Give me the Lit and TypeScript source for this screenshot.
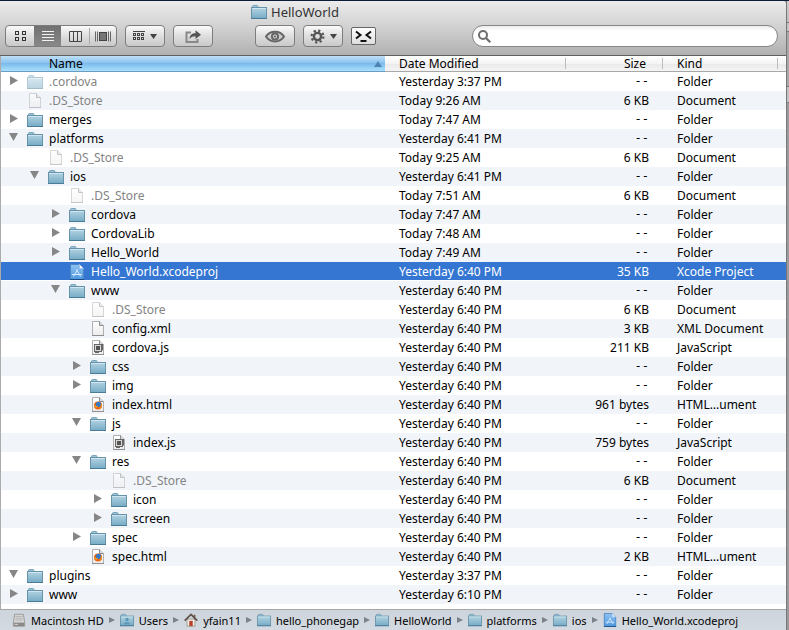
import { LitElement, html, css, svg, nothing } from "lit";
import { customElement, property, state } from "lit/decorators.js";
import { classMap } from "lit/directives/class-map.js";
import { styleMap } from "lit/directives/style-map.js";

type IconName = "folder" | "doc" | "js" | "html" | "xcode" | "disk" | "users" | "home";

const folderShape = svg`
  <path d="M1.5 3.5V2L2.2 1.5H6.2L7 2.2V3.5" fill="#9cc4d8" stroke="#7ba5ba"/>
  <rect x="0.5" y="3.5" width="15" height="11" fill="url(#front)" stroke="#6793aa"/>
  <path d="M1 4.5H15" stroke="#cfe5ef"/>
  <path d="M0 14.5H16" stroke="#4b7c97"/>`;

const pageShape = svg`
  <path d="M2.5 0.5H9.5L13.5 4.5V14.5H2.5Z" fill="url(#page)" stroke="#b0b0b0"/>
  <path d="M2 14.5H14" stroke="#8f8f8f"/>
  <path d="M9.5 0.5V4.5H13.5" fill="#dcdcdc" stroke="#8c8c8c"/>`;

const shapes: Record<IconName, unknown> = {
  folder: folderShape,
  doc: pageShape,
  js: svg`${pageShape}
    <rect x="4.5" y="4.5" width="7" height="7" fill="#d8d8d8" stroke="#666"/>
    <rect x="6" y="6" width="4" height="4" fill="#555"/>
    <path d="M12.5 4V10.5M5 12.5H9" stroke="#666"/>`,
  html: svg`${pageShape}
    <circle cx="8" cy="8.5" r="4" fill="#e8641b"/>
    <circle cx="8.5" cy="7.3" r="2.6" fill="#3579c4"/>
    <path d="M4.2 7C5 9.2 6.5 9.6 8.2 9.2C7 10.6 5.8 10.6 5 10.1Z" fill="#f7a823"/>
    <path d="M12 6.5C12.4 9.5 10.8 12.5 8 12.5C10 11.6 11 9.6 10.8 7Z" fill="#f28a1e"/>`,
  xcode: svg`
    <path d="M1.5 0.5H10.5L14.5 4.5V15.5H1.5Z" fill="url(#blue)" stroke="#4a86c4"/>
    <path d="M1 15.5H15" stroke="#1d4d86"/>
    <path d="M10.5 0.5V4.5H14.5Z" fill="#fff" stroke="#9fc3e8"/>
    <path d="M4.5 12.5L8.5 5.5M7.5 5.5L11.5 12.5M3 10.5H13" stroke="#d6eafc"/>`,
  disk: svg`
    <path d="M3 1.5H13L14.5 11V15H1.5V11Z" fill="#d5d5d5" stroke="#959595"/>
    <path d="M4 4H12M4 6H12M4 8H12" stroke="#b4b4b4"/>
    <rect x="2" y="11" width="12" height="4" fill="#8a8a8a"/>
    <path d="M3 13H7" stroke="#ddd"/>`,
  users: svg`${folderShape}
    <circle cx="8" cy="7.5" r="2" fill="#5f9ab8"/>
    <path d="M4.5 13C4.5 9.5 11.5 9.5 11.5 13Z" fill="#5f9ab8"/>`,
  home: svg`
    <rect x="3.5" y="7" width="9" height="8" fill="#f7f3ea" stroke="#9b9386"/>
    <rect x="11" y="2" width="2" height="4" fill="#7c5a45"/>
    <path d="M0.8 8.6L8 1.6L15.2 8.6" stroke="#5c5148" stroke-width="2"/>
    <rect x="6" y="9" width="4" height="6" fill="#b5432c"/>`,
};

@customElement("file-icon")
export class FileIcon extends LitElement {
  @property() name: IconName = "folder";

  static styles = css`
    :host { display: block; flex: none; width: 16px; height: 16px; }
    .art { display: block; width: 100%; height: 100%; }
  `;

  render() {
    return html`<svg class="art" viewBox="0 0 16 16" aria-hidden="true" fill="none">
      <defs>
        <linearGradient id="front" x2="0" y2="1"><stop stop-color="#b3d3e2"/><stop offset="1" stop-color="#76abc5"/></linearGradient>
        <linearGradient id="page" x2="0" y2="1"><stop stop-color="#fff"/><stop offset="1" stop-color="#ececec"/></linearGradient>
        <linearGradient id="blue" x2="0" y2="1"><stop stop-color="#8fc3f2"/><stop offset="1" stop-color="#4c97e0"/></linearGradient>
      </defs>
      ${shapes[this.name]}
    </svg>`;
  }
}

interface Entry {
  name: string;
  level: number;
  icon: IconName;
  date: string;
  size: string;
  kind: string;
  open?: boolean;
  hidden: boolean;
}

const folder = (level: number, name: string, date: string, open = false): Entry => ({
  name, level, icon: "folder", date, size: "--", kind: "Folder", open, hidden: name.startsWith("."),
});
const file = (level: number, name: string, date: string, size: string, kind: string, icon: IconName = "doc"): Entry => ({
  name, level, icon, date, size, kind, hidden: name.startsWith("."),
});

const Y = "Yesterday 6:40 PM";
const entries: Entry[] = [
  folder(0, ".cordova", "Yesterday 3:37 PM"),
  file(0, ".DS_Store", "Today 9:26 AM", "6 KB", "Document"),
  folder(0, "merges", "Today 7:47 AM"),
  folder(0, "platforms", "Yesterday 6:41 PM", true),
  file(1, ".DS_Store", "Today 9:25 AM", "6 KB", "Document"),
  folder(1, "ios", "Yesterday 6:41 PM", true),
  file(2, ".DS_Store", "Today 7:51 AM", "6 KB", "Document"),
  folder(2, "cordova", "Today 7:47 AM"),
  folder(2, "CordovaLib", "Today 7:48 AM"),
  folder(2, "Hello_World", "Today 7:49 AM"),
  file(2, "Hello_World.xcodeproj", Y, "35 KB", "Xcode Project", "xcode"),
  folder(2, "www", Y, true),
  file(3, ".DS_Store", Y, "6 KB", "Document"),
  file(3, "config.xml", Y, "3 KB", "XML Document"),
  file(3, "cordova.js", Y, "211 KB", "JavaScript", "js"),
  folder(3, "css", Y),
  folder(3, "img", Y),
  file(3, "index.html", Y, "961 bytes", "HTML…ument", "html"),
  folder(3, "js", Y, true),
  file(4, "index.js", Y, "759 bytes", "JavaScript", "js"),
  folder(3, "res", Y, true),
  file(4, ".DS_Store", Y, "6 KB", "Document"),
  folder(4, "icon", Y),
  folder(4, "screen", Y),
  folder(3, "spec", Y),
  file(3, "spec.html", Y, "2 KB", "HTML…ument", "html"),
  folder(0, "plugins", "Yesterday 3:37 PM", true),
  folder(0, "www", "Yesterday 6:10 PM"),
];

const trail: [IconName, string][] = [
  ["disk", "Macintosh HD"],
  ["users", "Users"],
  ["home", "yfain11"],
  ["folder", "hello_phonegap"],
  ["folder", "HelloWorld"],
  ["folder", "platforms"],
  ["folder", "ios"],
  ["xcode", "Hello_World.xcodeproj"],
];

const gridSquares = [0, 1].flatMap((r) => [0, 1].map((c) => [c * 7, r * 6]));
const groupSquares = [0, 1].flatMap((r) => [0, 1, 2].map((c) => [c * 4, r * 4]));

const views = [
  { label: "Icon view", w: 11, h: 10, art: svg`${gridSquares.map(([x, y]) => svg`<rect x=${x + 0.5} y=${y + 0.5} width="3" height="3" stroke="#333"/>`)}` },
  { label: "List view", w: 12, h: 12, art: svg`<path d="M0 1.5H12M0 4.5H12M0 7.5H12M0 10.5H12" stroke="#f2f2f2"/>` },
  { label: "Column view", w: 13, h: 11, art: svg`<path d="M.5 .5H12.5V10.5H.5ZM4.5 .5V10.5M8.5 .5V10.5" stroke="#444"/>` },
  { label: "Cover flow view", w: 16, h: 11, art: svg`<rect x="4.5" y="1.5" width="7" height="8" fill="#777" stroke="#444"/><path d="M.5 .5V10.5M2.5 .5V10.5M13.5 .5V10.5M15.5 .5V10.5" stroke="#666"/>` },
];

@customElement("app-root")
export class AppRoot extends LitElement {
  @state() private view = 1;
  @state() private selected = 10;

  static styles = css`
    :host {
      display: flex;
      min-height: 100vh;
      box-sizing: border-box;
      border-top: 1px solid #0b1c38;
      background: #a4a4a6;
      font: 12px/19px "Noto Sans", "Open Sans", sans-serif;
      color: #000;
    }
    button, input { font: inherit; color: inherit; margin: 0; padding: 0; }
    button { border: 0; background: none; }
    .art { display: block; fill: none; }
    .window { flex: 1; min-width: 0; display: flex; flex-direction: column; background: #fff; border-top-right-radius: 4px; }
    .behind { flex: none; width: 3px; background: linear-gradient(#cfcfcf, #bdbdbd 21px, #777 21px 22px, #c4c4c4 22px 30px, #777 30px 31px, #a8a8a8 31px 85px, #777 85px 86px, #c2c2c2 86px 101px, #777 101px 102px, #9b9b9d 102px); border-left: 1px solid #777; box-sizing: border-box; }
    .chrome { background: linear-gradient(#ebebeb, #d0d0d0 50%, #b1b1b1); border-bottom: 1px solid #5f5f5f; border-top-right-radius: 4px; padding-bottom: 8px; }
    .title { display: flex; align-items: center; gap: 4px; box-sizing: border-box; height: 24px; margin: 0; padding: 0 0 2px 251px; font-size: 13px; font-weight: 400; color: #333; }
    .toolbar { display: flex; align-items: center; gap: 8px; height: 22px; padding: 0 8px 0 5px; }
    .tool, .views { box-sizing: border-box; height: 22px; border: 1px solid #7d7d7d; border-radius: 4px; background: linear-gradient(#fafafa, #dedede 50%, #c9c9c9); }
    .tool { flex: none; display: flex; align-items: center; justify-content: center; gap: 5px; width: 40px; }
    .views { display: flex; flex: none; width: 112px; overflow: hidden; }
    .view { flex: 1; display: grid; place-items: center; padding-left: 1px; }
    .view:last-child { background: linear-gradient(#aaa, #aaa) left center / 1px 16px no-repeat; }
    .view.on { background: linear-gradient(#707070, #888); }
    .look { margin-left: 34px; }
    .term { width: 25px; height: 18px; border: 1px solid #666; border-radius: 2px; background: linear-gradient(#fff, #ddd); }
    .search { display: flex; align-items: center; gap: 4px; box-sizing: border-box; flex: 0 1 306px; height: 22px; margin-left: auto; padding: 0 8px 0 5px; border: 1px solid #868686; border-radius: 11px; background: linear-gradient(#ececec, #fff 5px); }
    .query { flex: 1; min-width: 0; border: 0; background: none; outline: 0; }
    .list { flex: 1; border-left: 1px solid #ababab; }
    .table { width: 100%; table-layout: fixed; border-collapse: separate; border-spacing: 0; }
    .c-date { width: 181px; }
    .c-size { width: 97px; }
    .c-kind { width: 115px; }
    .c-rest { width: 8px; }
    th { height: 15px; padding: 0 0 0 14px; border-bottom: 1px solid #a8a8a8; text-align: left; font-weight: 400; line-height: 15px; background: linear-gradient(#fff, #f4f4f4 50%, #e9e9e9 50%, #f4f4f4); }
    th.name { padding: 0 3px 0 48px; background: linear-gradient(#bfe0f7, #8cc4ef 45%, #7bbbec 50%, #a9e0fb); border-bottom-color: #6c9cc4; }
    th.size { padding-right: 17px; }
    th.split { background: linear-gradient(#bdbdbd, #bdbdbd) right center / 1px 11px no-repeat, linear-gradient(#fff, #f4f4f4 50%, #e9e9e9 50%, #f4f4f4); }
    .sort { display: flex; align-items: center; justify-content: space-between; }
    td { height: 19px; padding: 0 0 0 14px; white-space: nowrap; overflow: hidden; }
    td.size, th.size { text-align: right; }
    td.size { padding-right: 14px; }
    td.none { font-family: "DejaVu Sans Mono", monospace; }
    td.name { padding: 0; }
    .row:nth-child(even) { background: #f1f5fa; }
    .row.selected { background: linear-gradient(#3476d2 18px, #fff 18px); color: #fff; }
    .cell { display: flex; align-items: center; height: 19px; padding-left: calc(var(--level) * 21px + 8px); }
    .toggle { display: flex; align-items: center; flex: none; box-sizing: border-box; width: 18px; height: 19px; padding-bottom: 2px; }
    .label { margin-left: 6px; }
    .hidden .label { color: #848484; }
    .hidden file-icon { opacity: 0.5; }
    .path { display: flex; align-items: center; gap: 5px; box-sizing: border-box; height: 21px; margin: 0; padding: 0 12px; border-top: 1px solid #a6a6a6; background: linear-gradient(#cdd4db, #d3dae1); list-style: none; font-size: 11px; white-space: nowrap; }
    .crumb { display: flex; align-items: center; gap: 5px; }
    .place { display: flex; align-items: center; gap: 5px; color: #000; text-decoration: none; }
    .place file-icon { width: 14px; height: 14px; }
  `;

  private toggle(e: Entry) {
    return html`<button class="toggle" aria-label="Toggle ${e.name}" aria-expanded=${e.open ? "true" : "false"}>
      <svg class="art" width="10" height="9"><path d=${e.open ? "M0 0H9L4.5 8Z" : "M1 0V9L9 4.5Z"} fill="#868686"/></svg>
    </button>`;
  }

  render() {
    const caret = html`<svg class="art" width="7" height="5" aria-hidden="true"><path d="M0 0H7L3.5 5Z" fill="#444"/></svg>`;
    return html`
      <main class="window">
        <header class="chrome">
          <h1 class="title"><file-icon></file-icon>HelloWorld</h1>
          <div class="toolbar">
            <div class="views" role="group" aria-label="View">
              ${views.map((v, i) => html`<button class=${classMap({ view: true, on: i === this.view })} aria-label=${v.label} @click=${() => (this.view = i)}>
                <svg class="art" width=${v.w} height=${v.h}>${v.art}</svg></button>`)}
            </div>
            <button class="tool" aria-label="Arrange">
              <svg class="art" width="12" height="11"><path d="M0 .5H12" stroke="#444"/>${groupSquares.map(([x, y]) => svg`<rect x=${x + 0.5} y=${y + 2.5} width="2" height="2" stroke="#444"/>`)}</svg>
              ${caret}
            </button>
            <button class="tool" aria-label="Share">
              <svg class="art" width="16" height="13"><path d="M6 2.5H1.5V12H12.5V9" stroke="#888" stroke-width="2"/><path d="M4.5 9C4.5 5 7 3.2 10.5 3.2V.2L16 4.8L10.5 9V6.2C8 6.2 6 6.8 4.5 9Z" fill="#555"/></svg>
            </button>
            <button class="tool look" aria-label="Quick Look">
              <svg class="art" width="20" height="13"><path d="M1 6.5C5 0 15 0 19 6.5C15 13 5 13 1 6.5Z" fill="#ccc" stroke="#666" stroke-width="2"/><circle cx="10" cy="6.5" r="4" fill="#666"/><circle cx="10" cy="6.5" r="2" fill="#ddd"/><circle cx="10" cy="6.5" r="1" fill="#555"/></svg>
            </button>
            <button class="tool" aria-label="Action">
              <svg class="art" width="15" height="15"><circle cx="7.5" cy="7.5" r="3.6" stroke="#555" stroke-width="2.4"/><circle cx="7.5" cy="7.5" r="5.9" stroke="#555" stroke-width="2.2" stroke-dasharray="2.2 2.434"/></svg>
              ${caret}
            </button>
            <button class="tool term" aria-label="Open terminal">
              <svg class="art" width="17" height="12"><path d="M1 1.5L5.5 5L1 8.5M16 1.5L11.5 5L16 8.5M5.5 11H11.5" stroke="#111" stroke-width="2"/></svg>
            </button>
            <label class="search">
              <svg class="art" width="13" height="13" aria-hidden="true"><circle cx="5" cy="5" r="4" stroke="#6d6d6d" stroke-width="2"/><path d="M8 8L12.3 12.3" stroke="#6d6d6d" stroke-width="2.2"/></svg>
              <input class="query" type="search" aria-label="Search">
            </label>
          </div>
        </header>
        <div class="list">
          <table class="table">
            <colgroup><col><col class="c-date"><col class="c-size"><col class="c-kind"><col class="c-rest"></colgroup>
            <thead>
              <tr>
                <th class="name" aria-sort="ascending"><div class="sort">Name<svg class="art" width="8" height="6" aria-hidden="true"><path d="M0 6H8L4 0Z" fill="#4d84b5"/></svg></div></th>
                <th class="split">Date Modified</th>
                <th class="size split">Size</th>
                <th class="split">Kind</th>
                <th></th>
              </tr>
            </thead>
            <tbody>
              ${entries.map((e, i) => html`
                <tr class=${classMap({ row: true, selected: i === this.selected, hidden: e.hidden })} @click=${() => (this.selected = i)}>
                  <td class="name"><div class="cell" style=${styleMap({ "--level": String(e.level) })}>
                    ${e.icon === "folder" ? this.toggle(e) : html`<span class="toggle"></span>`}
                    <file-icon name=${e.icon}></file-icon><span class="label">${e.name}</span>
                  </div></td>
                  <td>${e.date}</td>
                  <td class=${classMap({ size: true, none: e.size === "--" })}>${e.size}</td>
                  <td>${e.kind}</td>
                  <td></td>
                </tr>`)}
            </tbody>
          </table>
        </div>
        <ol class="path">
          ${trail.map(([icon, name], i) => html`<li class="crumb">
            <a class="place" href="#"><file-icon name=${icon}></file-icon>${name}</a>
            ${i < trail.length - 1 ? html`<svg class="art" width="6" height="6" aria-hidden="true"><path d="M0 0V6L6 3Z" fill="#7d8288"/></svg>` : nothing}
          </li>`)}
        </ol>
      </main>
      <div class="behind"></div>
    `;
  }
}
